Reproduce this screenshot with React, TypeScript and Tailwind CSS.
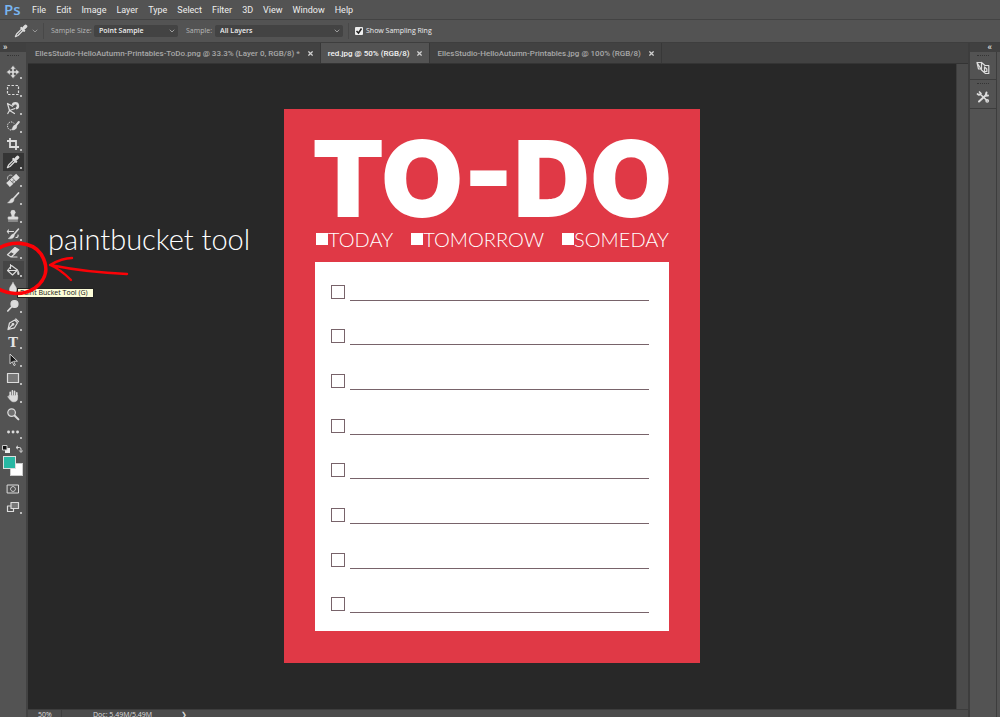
import type { ReactNode } from "react";
import { ChevronDown } from "lucide-react";

const menus = ["File", "Edit", "Image", "Layer", "Type", "Select", "Filter", "3D", "View", "Window", "Help"];

const tabs = [
  { name: "EllesStudio-HelloAutumn-Printables-ToDo.png @ 33.3% (Layer 0, RGB/8) *", active: false },
  { name: "red.jpg @ 50% (RGB/8)", active: true },
  { name: "EllesStudio-HelloAutumn-Printables.jpg @ 100% (RGB/8)", active: false },
];

const days = ["TODAY", "TOMORROW", "SOMEDAY"];
const rows = [1, 2, 3, 4, 5, 6, 7, 8];

function Icon({ children }: { children: ReactNode }) {
  return (
    <svg
      viewBox="0 0 14 14"
      className="size-[14px]"
      fill="none"
      stroke="#dcdcdc"
      strokeWidth="1.2"
      strokeLinecap="round"
      strokeLinejoin="round"
      aria-hidden="true"
    >
      {children}
    </svg>
  );
}

const eyedropper = (
  <Icon>
    <path d="M8 4.6 2.6 10 1.4 12.6 4 11.5 9.4 6" />
    <path d="m7.4 4 2.7 2.7M9 5l2.3-2.3" strokeWidth="2.4" />
    <path d="m10.6 3.4 1-1" strokeWidth="3.4" />
  </Icon>
);

const tools: { label: string; icon: ReactNode; flyout?: boolean }[] = [
  {
    label: "Move Tool",
    icon: (
      <Icon>
        <path d="M7 3v8M3 7h8" strokeWidth="1.6" />
        <path d="M7 1 4.8 3.8h4.4zM7 13l-2.2-2.8h4.4zM1 7l2.8-2.2v4.4zM13 7l-2.8-2.2v4.4z" fill="#dcdcdc" strokeWidth="0.3" />
      </Icon>
    ),
  },
  {
    label: "Rectangular Marquee Tool",
    icon: (
      <Icon>
        <rect x="1.5" y="2.5" width="11" height="9" strokeDasharray="2.4 1.6" strokeLinecap="butt" />
      </Icon>
    ),
  },
  {
    label: "Magnetic Lasso Tool",
    icon: (
      <Icon>
        <path d="m1.5 2.5 5 2.8M1.5 2.5l2 7L9 7.5M3.5 9.5 1.8 12.5M4 9.8l4.5 2.7" />
        <path d="M6.8 4.5A2.6 2.6 0 1 1 10 7.4" strokeWidth="2.4" strokeLinecap="butt" />
      </Icon>
    ),
  },
  {
    label: "Quick Selection Tool",
    icon: (
      <Icon>
        <path d="M8 4.5C6 1.5 1.5 3 1.5 6.8 1.5 10 4 11.5 6 11" strokeDasharray="1.3 1" strokeWidth="1" strokeLinecap="butt" />
        <path d="M12.8 3 9.8 6.6" strokeWidth="2" />
        <path d="M9.2 6c-2.4.2-2 2.8-3.7 4.8 2.7.5 5.3-.5 5.3-3.3z" fill="#dcdcdc" strokeWidth="0.5" />
      </Icon>
    ),
  },
  {
    label: "Crop Tool",
    icon: (
      <Icon>
        <path d="M4 1v9h9M1 4h9v9" strokeWidth="1.8" strokeLinecap="butt" strokeLinejoin="miter" />
      </Icon>
    ),
  },
  { label: "Eyedropper Tool", icon: eyedropper },
  {
    label: "Spot Healing Brush Tool",
    icon: (
      <Icon>
        <path d="M6 2.5C4 1 1 3 1.5 6" strokeWidth="0.8" />
        <path d="m4 10.2 6-5.6" strokeWidth="5.4" strokeLinecap="square" />
        <path d="m4.5 7.5 3.3 3.6M6.8 5.4l3.3 3.6M6.5 8.2h.1M7.8 7.5h.1M7.4 9h.1" stroke="#484848" strokeWidth="0.7" />
      </Icon>
    ),
  },
  {
    label: "Brush Tool",
    icon: (
      <Icon>
        <path d="M12.5 2 7.5 7.5" strokeWidth="1.7" />
        <path d="M6.8 7.2c-2.5 0-2.3 2.9-5.3 4.6 3.5.8 6.5-.2 6.6-3.3z" fill="#dcdcdc" strokeWidth="0.4" />
      </Icon>
    ),
  },
  {
    label: "Clone Stamp Tool",
    icon: (
      <Icon>
        <circle cx="7" cy="3.5" r="2.4" fill="#dcdcdc" strokeWidth="0.2" />
        <path d="M6.2 5h1.6l.5 3h3.5v2.2H2.2V8h3.5zM2.5 12h9" fill="#dcdcdc" strokeWidth="0.8" />
      </Icon>
    ),
  },
  {
    label: "History Brush Tool",
    icon: (
      <Icon>
        <path d="M1.5 4.5h6M2.5 3 1.3 4.500 2.5 6M10 10.5c1.5 0 2.500-1 2-2.500" />
        <path d="m12.5 2-4.7 5.5" strokeWidth="1.5" />
        <path d="M7.3 7c-2.4 0-2.3 3-5.2 4.6 3.5.8 6-.2 6.3-3.5z" fill="#dcdcdc" strokeWidth="0.4" />
      </Icon>
    ),
  },
  {
    label: "Eraser Tool",
    icon: (
      <Icon>
        <path d="m5 6.5 4-4 3.8 2.2-4 4z" fill="#dcdcdc" />
        <path d="m5 6.5-3.5 3.3 3.6 2.2 3.7-3.3M5 12h6" />
      </Icon>
    ),
  },
  {
    label: "Paint Bucket Tool",
    icon: (
      <Icon>
        <path d="m5.5 2.5 6 4.5-5 5-5-4.5zM4.5 1.5v4M2 7.5h9" strokeWidth="1.1" />
        <path d="M12 8c1.3 1.5 1.3 3.5.4 4-.9-.5-1.1-2.5-.4-4z" fill="#dcdcdc" strokeWidth="0.8" />
      </Icon>
    ),
  },
  {
    label: "Blur Tool",
    icon: (
      <Icon>
        <path d="M7 1.5c1.5 3 3.5 4.5 3.5 7a3.5 3.5 0 0 1-7 0c0-2.5 2-4 3.5-7z" fill="#dcdcdc" strokeWidth="0.5" />
      </Icon>
    ),
  },
  {
    label: "Dodge Tool",
    icon: (
      <Icon>
        <circle cx="8.5" cy="5" r="3.5" fill="#dcdcdc" />
        <path d="M5.5 8 1.8 12" strokeWidth="1.7" />
      </Icon>
    ),
  },
  {
    label: "Pen Tool",
    icon: (
      <Icon>
        <path d="M2 12.5 3.5 6 8.8 3l2.7 2.8-3 5zM2 12.5l4.7-5M9.8 2l2.7 2.7" />
        <circle cx="7" cy="7.3" r="0.8" fill="#dcdcdc" />
      </Icon>
    ),
  },
  {
    label: "Type Tool",
    icon: <span className="pt-0.5 font-['DejaVu_Serif',serif] text-[13px] leading-4 font-bold text-[#e4e4e4]">T</span>,
  },
  {
    label: "Path Selection Tool",
    icon: (
      <Icon>
        <path d="M4 1.5v9.3l2.3-2.2 1.7 4 1.3-.6-1.7-3.8H11z" fill="#161616" strokeWidth="0.9" />
      </Icon>
    ),
  },
  {
    label: "Rectangle Tool",
    icon: (
      <Icon>
        <rect x="1.5" y="2.5" width="11" height="9" fill="#777777" />
      </Icon>
    ),
  },
  {
    label: "Hand Tool",
    icon: (
      <Icon>
        <path d="M4.2 7V3.2M6.4 6V1.8M8.6 6V2.2M10.8 7V3.8" strokeWidth="1.6" />
        <path d="M3.5 6.5h8.1v2.7c0 2.3-1.5 3.6-3.7 3.6-2.5 0-3.5-1.3-6.2-5.2l.7-.4 1.6 1.3z" fill="#dcdcdc" strokeWidth="0.6" />
      </Icon>
    ),
  },
  {
    label: "Zoom Tool",
    flyout: false,
    icon: (
      <Icon>
        <circle cx="5.6" cy="5.6" r="3.8" fill="#707070" />
        <path d="m8.8 8.8 3.6 3.6" strokeWidth="2" />
      </Icon>
    ),
  },
  {
    label: "Edit Toolbar",
    icon: (
      <Icon>
        <path d="M2.5 7h.1M7 7h.1M11.5 7h.1" strokeWidth="2.8" />
      </Icon>
    ),
  },
];

function Grip() {
  return <span className="h-px w-3 border-t border-dotted border-[#343434]" />;
}

function MenuBar() {
  return (
    <nav className="flex h-5 shrink-0 items-center border-b border-[#434343] pl-1" aria-label="Menu">
      <span className="w-[23px] self-start font-['Open_Sans',sans-serif] text-[15px] leading-[18px] font-semibold text-[#79b6f2]">
        Ps
      </span>
      <div className="flex">
        {menus.map((menu) => (
          <button key={menu} className="px-[5px] text-[9px] leading-[18px] text-[#eeeeee]">
            {menu}
          </button>
        ))}
      </div>
    </nav>
  );
}

function Dropdown({ id, value, className }: { id: string; value: string; className: string }) {
  return (
    <div className={`relative ${className}`}>
      <select
        id={id}
        className="block h-3 w-full appearance-none rounded-xs bg-[#434343] pl-[5px] font-['Open_Sans',sans-serif] text-[7px] leading-3 font-semibold text-[#eeeeee] outline-none"
      >
        <option>{value}</option>
      </select>
      <ChevronDown className="pointer-events-none absolute top-0.5 right-0.5 size-2 text-[#cccccc]" />
    </div>
  );
}

function OptionsBar() {
  return (
    <div className="flex h-[23px] shrink-0 items-center border-b border-[#3e3e3e] font-['Open_Sans',sans-serif] text-[7px] text-[#b8b8b8]">
      <div className="flex h-4 w-11 items-center gap-[3px] border-r border-[#484848] pl-[14px]">
        {eyedropper}
        <ChevronDown className="size-2" />
      </div>
      <label htmlFor="sample-size" className="w-[50px] pl-[7px] whitespace-nowrap">
        Sample Size:
      </label>
      <Dropdown id="sample-size" value="Point Sample" className="w-[84px]" />
      <label htmlFor="sample" className="w-[37px] pl-2 whitespace-nowrap">
        Sample:
      </label>
      <Dropdown id="sample" value="All Layers" className="w-32" />
      <label className="ml-[5px] flex h-4 items-center gap-[3px] border-l border-[#484848] pl-[6px] font-medium text-[#eeeeee]">
        <span className="relative flex">
          <input type="checkbox" defaultChecked className="size-2 appearance-none rounded-[1px] bg-[#eeeeee]" />
          <svg viewBox="0 0 8 8" className="pointer-events-none absolute inset-0 size-2" fill="none" stroke="#222222" strokeWidth="1.5">
            <path d="m1.5 4 2 2 3-4.5" />
          </svg>
        </span>
        Show Sampling Ring
      </label>
    </div>
  );
}

function Toolbar() {
  return (
    <aside className="flex w-7 shrink-0 flex-col border-r-2 border-[#424242] bg-[#535353]">
      <div className="h-[9px] bg-[#404040] pl-[3px] text-[9px] leading-[8px] font-bold text-[#dddddd]">»</div>
      <div className="flex h-[11px] justify-center pt-[3px]">
        <Grip />
      </div>
      {tools.map(({ label, icon, flyout = true }) => (
        <button
          key={label}
          aria-label={label}
          className={`relative ml-[3px] flex h-[18px] w-[21px] items-center justify-center pr-px ${
            label === "Eyedropper Tool" ? "bg-[#353535]" : label === "Paint Bucket Tool" ? "bg-[#454545]" : ""
          }`}
        >
          {icon}
          {flyout && <span className="absolute right-0.5 bottom-0.5 size-0.5 bg-[#bbbbbb]" />}
        </button>
      ))}
      <div className="flex h-[15px] items-center gap-[5px] pl-0.5">
        <button aria-label="Default colors">
          <svg viewBox="0 0 8 8" className="size-2">
            <path d="M3 3h5v5H3z" fill="#eeeeee" />
            <path d="M.5.5h4.5v4.5H.5z" fill="#111111" stroke="#cccccc" />
          </svg>
        </button>
        <button aria-label="Switch colors">
          <svg viewBox="0 0 8 8" className="size-2" fill="none" stroke="#dddddd">
            <path d="M1.5 2.5H4.5Q6 2.5 6 4V6.5M3 .8 1 2.5 3 4.2M4.3 5.5 6 7.5 7.7 5.5" />
          </svg>
        </button>
      </div>
      <div className="grid h-6 pl-[3px]">
        <button aria-label="Background color" className="col-start-1 row-start-1 mt-[7px] ml-[7px] size-[13px] border border-[#cccccc] bg-white" />
        <button aria-label="Foreground color" className="z-10 col-start-1 row-start-1 size-[13px] border border-[#dddddd] bg-[#28b7a3]" />
      </div>
      <button aria-label="Quick Mask" className="ml-[3px] flex h-[18px] w-[21px] items-center justify-center pr-px">
        <Icon>
          <rect x="1.5" y="3" width="11" height="8" strokeWidth="1" />
          <circle cx="7" cy="7" r="2.4" strokeWidth="1" strokeDasharray="1 .6" />
        </Icon>
      </button>
      <button aria-label="Screen Mode" className="relative ml-[3px] flex h-[18px] w-[21px] items-center justify-center pr-px">
        <Icon>
          <path d="M4.5 6H1.5v5.5h6V9" />
          <rect x="5" y="2.5" width="7.5" height="6" fill="#777777" />
        </Icon>
        <span className="absolute right-0.5 bottom-0.5 size-0.5 bg-[#bbbbbb]" />
      </button>
    </aside>
  );
}

function Tabs() {
  return (
    <div className="flex h-[21px] shrink-0 border-b border-[#343434] bg-[#424242]">
      {tabs.map((tab) => (
        <div
          key={tab.name}
          className={`flex items-center gap-2 border-r border-[#383838] pt-px pr-[7px] pl-[7px] text-[8px] font-medium whitespace-nowrap ${
            tab.active ? "bg-[#535353] text-[#f4f4f4]" : "text-[#a8a8a8]"
          }`}
        >
          <button>{tab.name}</button>
          <button aria-label="Close" className="text-[#d0d0d0]">
            <svg viewBox="0 0 6 6" className="size-[5px]" stroke="currentColor" strokeWidth="1.5">
              <path d="m.5.5 5 5m0-5-5 5" />
            </svg>
          </button>
        </div>
      ))}
    </div>
  );
}

function TodoPrintable() {
  return (
    <article className="flex h-[554px] w-[416px] flex-col bg-[#e03946] px-[31px] pb-8">
      <h1 className="mt-[22px] flex h-24 items-center justify-center font-['Inter',sans-serif] text-[106px] leading-[96px] font-black whitespace-nowrap text-white">
        TO-DO
      </h1>
      <div className="flex h-6 items-center justify-between font-['Lato',sans-serif] text-[20px] leading-6 font-light text-white">
        {days.map((day) => (
          <label key={day} className="flex items-center">
            <input type="checkbox" className="ml-px size-3 appearance-none bg-white" />
            {day}
          </label>
        ))}
      </div>
      <ul className="mt-[11px] flex flex-1 flex-col justify-between bg-white pt-[23px] pr-5 pb-[17px] pl-4">
        {rows.map((row) => (
          <li key={row} className="flex h-4 gap-[5px]">
            <input type="checkbox" aria-label={`Done ${row}`} className="size-[14px] appearance-none border border-[#78636a]" />
            <input type="text" aria-label={`Task ${row}`} className="h-4 min-w-0 flex-1 border-b border-[#78636a] outline-none" />
          </li>
        ))}
      </ul>
    </article>
  );
}

function SidePanels() {
  return (
    <aside className="flex w-8 shrink-0 flex-col border-l-2 border-[#3d3d3d] bg-[#535353]">
      <div className="h-[9px] bg-[#404040] pr-2 text-right text-[9px] leading-[8px] font-bold text-[#dddddd]">«</div>
      <div className="mr-[3px] flex flex-1 flex-col border-r border-[#3d3d3d]">
        <button aria-label="Libraries" className="flex h-7 flex-col items-center gap-[5px] border-b border-[#3d3d3d] pt-[3px]">
          <Grip />
          <Icon>
            <path d="M1 1.5h4.5v6.5H2.5zM1 1.5 5.5 9M5.5 1.5 9 4.5h3.8v8H9.5L5.5 9M8.5 6v4.5h2.3V8z" />
          </Icon>
        </button>
        <button aria-label="Tool presets" className="flex h-[29px] flex-col items-center gap-[6px] border-b border-[#3d3d3d] pt-[3px]">
          <Grip />
          <Icon>
            <path d="M4.5 4.5 11 10.5M3.5 2 5 3.5 3 5 1.5 4" strokeWidth="1.7" />
            <path d="M9.5 5.5 3 11.5M12 5.5 9.5 5.7 10.5 2.5" strokeWidth="2" />
            <circle cx="11.2" cy="10.8" r="1.3" />
          </Icon>
        </button>
      </div>
    </aside>
  );
}

function Annotation() {
  return (
    <div className="pointer-events-none absolute inset-0 overflow-hidden">
      <p className="absolute top-[223px] left-12 font-['Lato',sans-serif] text-[29px] leading-8 font-light whitespace-nowrap text-white">
        paintbucket tool
      </p>
      <div
        role="tooltip"
        className="absolute top-[288px] left-[17px] h-[10px] w-[77px] border border-[#222222] bg-[#fdfdd8] pl-0.5 font-['Open_Sans',sans-serif] text-[7px] leading-[8px] whitespace-nowrap text-[#111111]"
      >
        Paint Bucket Tool (G)
      </div>
      <svg viewBox="0 0 140 80" className="absolute top-[230px] left-0 h-20 w-[140px]" fill="none" stroke="#fb0207" strokeLinecap="round">
        <path d="M-4 20C10 10 32 11 41 24c8 13 6 25-6 34-12 8-28 7-40-1" strokeWidth="3.6" />
        <path d="M50 35c25 5 52 8 77 9M50 35c7-4 14-7 22-7M50 35c8 3 15 9 21 15" strokeWidth="2.4" />
      </svg>
    </div>
  );
}

export default function App() {
  return (
    <div className="relative flex h-screen flex-col overflow-hidden bg-[#535353] font-['Roboto','Open_Sans',sans-serif]">
      <MenuBar />
      <OptionsBar />
      <div className="flex min-h-0 flex-1">
        <Toolbar />
        <div className="flex min-w-0 flex-1 flex-col">
          <Tabs />
          <div className="flex min-h-0 flex-1">
            <main className="flex min-w-0 flex-1 items-center justify-center bg-[#282828] pb-0.5">
              <TodoPrintable />
            </main>
            <div className="w-3 border-l border-[#3d3d3d] bg-[#4b4b4b]" />
          </div>
          <footer className="flex h-2 shrink-0 overflow-hidden border-t border-[#3d3d3d] bg-[#4b4b4b] font-['Open_Sans',sans-serif] text-[7px] leading-[9px] text-[#dddddd]">
            <span className="w-[34px] border-r border-[#3d3d3d] pl-[10px] font-medium">50%</span>
            <span className="w-[119px] pl-[31px]">Doc: 5.49M/5.49M</span>
            <span>❯</span>
          </footer>
        </div>
        <SidePanels />
      </div>
      <Annotation />
    </div>
  );
}
